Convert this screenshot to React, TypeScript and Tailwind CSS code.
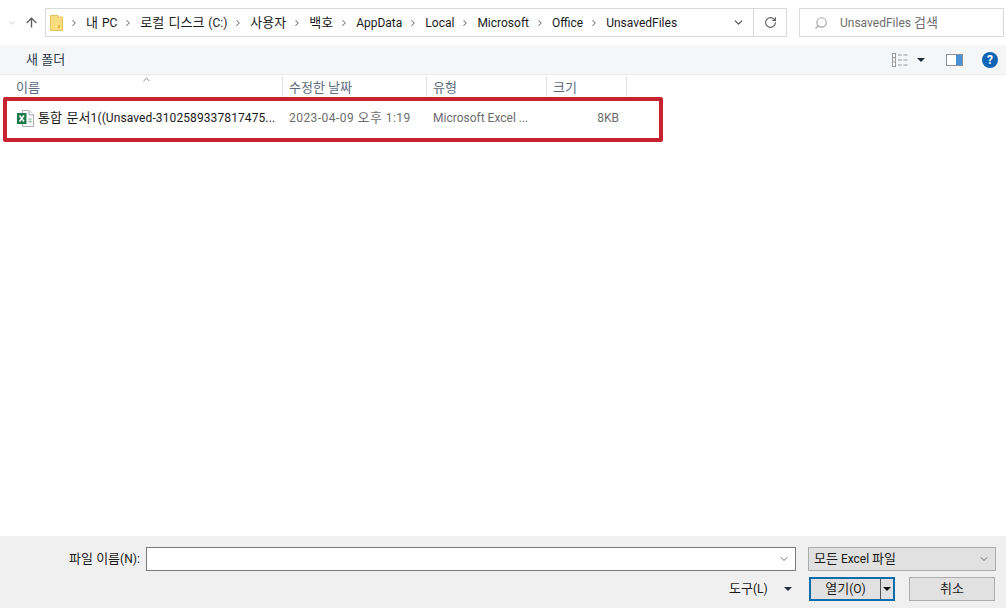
import { ArrowUp, ChevronDown, ChevronRight, ChevronUp, RotateCw, Search } from 'lucide-react'

const crumbs = ['내 PC', '로컬 디스크 (C:)', '사용자', '백호', 'AppData', 'Local', 'Microsoft', 'Office', 'UnsavedFiles']

// Hangul runs are set a pixel larger than the Latin text around them
function Mixed({ text }: { text: string }) {
  const parts = text.split(/([\uAC00-\uD7A3]+(?: [\uAC00-\uD7A3]+)*)/)
  return (
    <>
      {parts.map((p, i) =>
        i % 2 === 1 ? (
          <span key={i} className="text-[13px]">
            {p}
          </span>
        ) : (
          <span key={i}>{p}</span>
        ),
      )}
    </>
  )
}

function FolderIcon() {
  return (
    <svg width="13" height="16" viewBox="0 0 13 16" className="shrink-0">
      <path d="M0.5 0.5 H8 V2 H12.5 V15.5 H0.5 Z" fill="#fbdc7f" stroke="#e8c35c" />
      <rect x="8" y="10" width="2" height="3" fill="#e3b94e" />
    </svg>
  )
}

function ExcelIcon() {
  return (
    <svg width="17" height="17" viewBox="0 0 17 17" className="shrink-0">
      <path d="M5.5 0.5 H12 L16.5 5 V16.5 H5.5 Z" fill="#fff" stroke="#a9b0ae" />
      <path d="M12 0.5 V5 H16.5" fill="#f1f1f1" stroke="#a9b0ae" />
      <rect x="0" y="3" width="9.5" height="11" fill="#1f7a4a" />
      <path d="M2.5 5.5 L7 11.5 M7 5.5 L2.5 11.5" stroke="#fff" strokeWidth="1.5" />
      <path d="M11 9 H15 M11 11.5 H15 M13 8 V13" stroke="#9ec7b0" />
    </svg>
  )
}

function DetailsIcon() {
  return (
    <svg width="16" height="14" viewBox="0 0 16 14">
      <rect x="0.5" y="0.5" width="3" height="13" fill="#fff" stroke="#9a9a9a" />
      <path d="M0.5 4.5 H3.5 M0.5 9 H3.5" stroke="#9a9a9a" />
      <path d="M6 2 H10 M6 7 H10 M6 12 H10 M11.5 2 H15.5 M11.5 7 H15.5 M11.5 12 H15.5" stroke="#a0a0a0" />
    </svg>
  )
}

function PaneIcon() {
  return (
    <svg width="17" height="12" viewBox="0 0 17 12">
      <rect x="0.5" y="0.5" width="16" height="11" fill="#fff" stroke="#8a9199" />
      <rect x="10" y="1" width="6" height="10" fill="#4a90d4" />
    </svg>
  )
}

function Caret({ className }: { className?: string }) {
  return <span className={`w-0 h-0 border-x-[4px] border-x-transparent border-t-[4px] border-t-[#1f2d3d] ${className ?? ''}`} />
}

function HeaderCell({ label, width }: { label: string; width: string }) {
  return (
    <div className={`${width} h-full pl-[6px] pt-[2px] border-r border-[#e5e5e5] text-[#5b6b7d] shrink-0`}>
      <Mixed text={label} />
    </div>
  )
}

export default function App() {
  return (
    <div
      className="w-[1006px] h-[608px] bg-white flex flex-col overflow-hidden text-[12px] text-[#1a1a1a] relative"
      style={{ fontFamily: 'Roboto, "Noto Sans CJK KR", sans-serif' }}
    >
      {/* Address bar */}
      <div className="h-[45px] flex items-start pt-[8px] shrink-0">
        <div className="w-[45px] h-[29px] flex items-center pl-[7px] gap-[7px]">
          <ChevronDown size={10} color="#c8c8c8" strokeWidth={2} />
          <ArrowUp size={15} color="#5e5e5e" strokeWidth={2.25} />
        </div>
        <div className="w-[742px] h-[29px] border border-[#d9d9d9] flex items-center shrink-0">
          <div className="ml-[4px] mr-[6px]">
            <FolderIcon />
          </div>
          <div className="flex-1 flex items-center gap-[6px] whitespace-nowrap overflow-hidden [word-spacing:1px]">
            {crumbs.map((c) => (
              <div key={c} className="flex items-center gap-[7px]">
                <ChevronRight size={10} color="#707070" strokeWidth={2.5} />
                <span>
                  <Mixed text={c} />
                </span>
              </div>
            ))}
          </div>
          <div className="w-[33px] flex justify-center pl-[3px]">
            <ChevronDown size={13} color="#5c5c5c" strokeWidth={2.5} />
          </div>
          <div className="w-[33px] h-[29px] border-l border-[#d9d9d9] flex items-center justify-center">
            <RotateCw size={13} color="#5c5c5c" strokeWidth={2} />
          </div>
        </div>
        <div className="ml-[12px] w-[205px] h-[29px] border border-[#d9d9d9] flex items-center pl-[14px] gap-[12px] text-[#6d6d6d] shrink-0">
          <Search size={14} color="#a5a5a5" className="-scale-x-100" />
          <span>
            <Mixed text="UnsavedFiles 검색" />
          </span>
        </div>
      </div>

      {/* Toolbar */}
      <div className="h-[30px] bg-[#f5f6f7] flex items-center pl-[26px] pr-[8px] shrink-0 border-b border-[#eaebec]">
        <span className="text-[#2a3a4c]">
          <Mixed text="새 폴더" />
        </span>
        <div className="ml-auto flex items-center">
          <DetailsIcon />
          <Caret className="ml-[9px]" />
          <div className="ml-[21px]">
            <PaneIcon />
          </div>
          <div className="ml-[19px] w-[16px] h-[16px] rounded-full bg-[#0f64b4] text-white font-bold text-[12px] leading-[16px] text-center">
            ?
          </div>
        </div>
      </div>

      {/* Column headers */}
      <div className="h-[22px] flex items-stretch pl-[10px] shrink-0 mt-[1px] relative">
        <ChevronUp size={11} color="#7a7a7a" className="absolute left-[141px] -top-[2px]" />
        <HeaderCell label="이름" width="w-[273px]" />
        <HeaderCell label="수정한 날짜" width="w-[144px]" />
        <HeaderCell label="유형" width="w-[120px]" />
        <HeaderCell label="크기" width="w-[80px]" />
      </div>

      {/* File list */}
      <div className="flex-1 relative">
        <div className="h-[40px] flex items-center pl-[17px] whitespace-nowrap">
          <div className="w-[266px] flex items-center gap-[4px] shrink-0">
            <ExcelIcon />
            <span className="tracking-[0.1px] [word-spacing:1px]">
              <Mixed text="통합 문서1((Unsaved-3102589337817475..." />
            </span>
          </div>
          <span className="w-[144px] pl-[6px] text-[#6d6d6d] shrink-0 tracking-[0.45px]">
            <Mixed text="2023-04-09 오후 1:19" />
          </span>
          <span className="w-[120px] pl-[6px] text-[#6d6d6d] shrink-0">Microsoft Excel ...</span>
          <span className="w-[72px] text-right text-[#6d6d6d] shrink-0">8KB</span>
        </div>
        <div className="absolute left-[3px] -top-[1px] w-[660px] h-[45px] border-[4px] border-[#c5232f] rounded-[2px]" />
      </div>

      {/* Footer */}
      <div className="h-[72px] bg-[#f0f0f0] shrink-0 flex flex-col pt-[11px] pl-[69px]">
        <div className="flex items-center h-[24px]">
          <span className="w-[77px] whitespace-nowrap">
            <Mixed text="파일 이름(N):" />
          </span>
          <div className="w-[650px] h-[24px] border border-[#7a7a7a] bg-white flex items-center justify-end pr-[5px]">
            <ChevronDown size={12} color="#6b6b6b" />
          </div>
          <div className="ml-[12px] w-[188px] h-[24px] border border-[#adadad] bg-[#e1e1e1] flex items-center pl-[5px] pr-[5px] justify-between">
            <span>
              <Mixed text="모든 Excel 파일" />
            </span>
            <ChevronDown size={12} color="#6b6b6b" />
          </div>
        </div>
        <div className="flex items-center h-[24px] mt-[6px] ml-[660px]">
          <span className="w-[55px] whitespace-nowrap">
            <Mixed text="도구(L)" />
          </span>
          <Caret />
          <div className="ml-[17px] w-[86px] h-[24px] border-2 border-[#0f6cab] bg-[#e1e1e1] flex items-center">
            <span className="flex-1 text-center">
              <Mixed text="열기(O)" />
            </span>
            <span className="h-full border-l border-[#555] w-[13px] flex items-center justify-center">
              <Caret className="border-t-[#111]" />
            </span>
          </div>
          <div className="ml-[14px] w-[86px] h-[24px] border border-[#adadad] bg-[#e1e1e1] flex items-center justify-center">
            <Mixed text="취소" />
          </div>
        </div>
      </div>
    </div>
  )
}
